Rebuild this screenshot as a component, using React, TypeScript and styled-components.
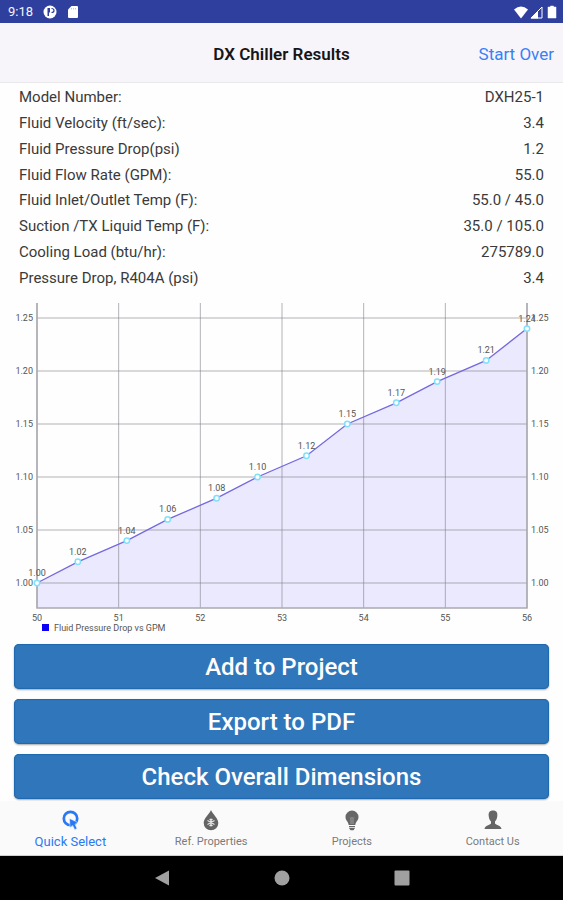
import React from "react";
import styled, { createGlobalStyle } from "styled-components";

const GlobalStyle = createGlobalStyle`
  * { box-sizing: border-box; }
  body { margin: 0; background: #fff; font-family: Roboto, "Liberation Sans", sans-serif; }
  button { font-family: inherit; border: 0; padding: 0; background: none; cursor: pointer; }
`;

const Screen = styled.div`
  display: flex;
  flex-direction: column;
  min-height: 100vh;
  background: #fefefe;
`;

const StatusBar = styled.div`
  display: flex;
  align-items: center;
  justify-content: space-between;
  height: 23px;
  padding: 1px 6px 0 8px;
  background: #2f3f9e;
  color: #f4f5fc;
  font-size: 13px;
  line-height: 20px;
`;

const StatusGroup = styled.div<{ $gap: number }>`
  display: flex;
  align-items: center;
  gap: ${(p) => p.$gap}px;
`;

const Header = styled.header`
  display: grid;
  grid-template-columns: 1fr auto 1fr;
  align-items: center;
  height: 60px;
  padding: 2px 9px 0;
  background: #f7f5f9;
  border-bottom: 1px solid #e9e8ea;
`;

const Title = styled.h1`
  grid-column: 2;
  margin: 0;
  color: #161618;
  font-size: 17px;
  line-height: 24px;
  font-weight: 600;
`;

const HeaderLink = styled.a`
  justify-self: end;
  color: #3880f8;
  font-size: 17px;
  line-height: 24px;
  text-decoration: none;
`;

const Results = styled.table`
  width: 100%;
  height: 207px;
  border-collapse: collapse;
  color: #3a3a3a;
  font-size: 15px;
  line-height: 20px;

  th, td { padding: 2px 19px 0; font-weight: 400; }
  th { text-align: left; }
  td { text-align: right; }
`;

const ChartDrawing = styled.svg`
  display: block;
  width: 100%;
  height: auto;
  font-size: 9px;
  fill: #555;
`;

const Actions = styled.div`
  display: flex;
  flex-direction: column;
  gap: 10px;
  padding: 4px 14px 2px;
`;

const ActionButton = styled.button`
  height: 45px;
  padding-top: 1px;
  border-radius: 5px;
  background: #3076ba;
  box-shadow: 0 1px 2px rgba(0, 0, 0, 0.35), inset 0 0 1px 1px #1f69b0;
  color: #fff;
  font-size: 24px;
  line-height: 32px;
  font-weight: 500;
`;

const TabBar = styled.nav`
  display: grid;
  grid-template-columns: repeat(4, 1fr);
  height: 55px;
  margin-top: auto;
  background: #fafafa;
  border-bottom: 1px solid #cfcfcf;
`;

const Tab = styled.button<{ $active?: boolean }>`
  display: flex;
  flex-direction: column;
  align-items: center;
  gap: 2px;
  padding-top: 8px;
  color: ${(p) => (p.$active ? "#2979f5" : "#7b7b7b")};
  font-size: ${(p) => (p.$active ? 13 : 11)}px;
  line-height: 18px;
`;

const SystemBar = styled.div`
  display: flex;
  align-items: center;
  justify-content: center;
  gap: 104px;
  height: 44px;
  background: #000;
`;

const SystemButton = styled.button`
  display: flex;
  width: 16px;
  height: 16px;
`;

const rows = [
  ["Model Number:", "DXH25-1"],
  ["Fluid Velocity (ft/sec):", "3.4"],
  ["Fluid Pressure Drop(psi)", "1.2"],
  ["Fluid Flow Rate (GPM):", "55.0"],
  ["Fluid Inlet/Outlet Temp (F):", "55.0 / 45.0"],
  ["Suction /TX Liquid Temp (F):", "35.0 / 105.0"],
  ["Cooling Load (btu/hr):", "275789.0"],
  ["Pressure Drop, R404A (psi)", "3.4"],
];

const points = [
  [50, 1.0], [50.5, 1.02], [51.1, 1.04], [51.6, 1.06], [52.2, 1.08], [52.7, 1.1],
  [53.3, 1.12], [53.8, 1.15], [54.4, 1.17], [54.9, 1.19], [55.5, 1.21], [56, 1.24],
];
const xTicks = [50, 51, 52, 53, 54, 55, 56];
const yTicks = [1.0, 1.05, 1.1, 1.15, 1.2, 1.25];

const LEFT = 37;
const RIGHT = 527;
const TOP = 13;
const BOTTOM = 318;
const px = (x: number) => LEFT + ((x - 50) * (RIGHT - LEFT)) / 6;
const py = (y: number) => 293 - (y - 1) * 1060;

function PressureChart() {
  const line = points.map(([x, y]) => `${px(x)},${py(y)}`).join(" ");
  return (
    <ChartDrawing viewBox="0 0 563 350" role="img" aria-label="Fluid Pressure Drop vs GPM">
      <polygon points={`${LEFT},${BOTTOM} ${line} ${RIGHT},${BOTTOM}`} fill="#ebe9fd" />
      <g stroke="#77777f" strokeOpacity="0.55">
        {xTicks.map((x) => (
          <line key={x} x1={px(x)} x2={px(x)} y1={TOP} y2={BOTTOM} />
        ))}
        {yTicks.map((y) => (
          <line key={y} x1={LEFT} x2={RIGHT} y1={py(y)} y2={py(y)} />
        ))}
      </g>
      <path d={`M${LEFT} ${TOP}V${BOTTOM}H${RIGHT}V${TOP}`} fill="none" stroke="#aaaab0" strokeWidth="1.5" />
      <polyline points={line} fill="none" stroke="#7468df" strokeWidth="1.3" />
      {points.map(([x, y]) => (
        <g key={x}>
          <circle cx={px(x)} cy={py(y)} r="2.7" fill="#fff" stroke="#82e0fb" strokeWidth="1.5" />
          <text x={px(x)} y={py(y) - 7} textAnchor="middle">{y.toFixed(2)}</text>
        </g>
      ))}
      {yTicks.map((y) => (
        <g key={y}>
          <text x="33" y={py(y) + 3} textAnchor="end">{y.toFixed(2)}</text>
          <text x="531" y={py(y) + 3}>{y.toFixed(2)}</text>
        </g>
      ))}
      {xTicks.map((x) => (
        <text key={x} x={px(x)} y="331" textAnchor="middle">{x}</text>
      ))}
      <rect x="42" y="334" width="7" height="7" fill="#0a00f5" />
      <text x="54" y="341">Fluid Pressure Drop vs GPM</text>
    </ChartDrawing>
  );
}

const QuickIcon = () => (
  <svg width="22" height="22" viewBox="0 0 22 22" fill="none" stroke="currentColor">
    <circle cx="11.500" cy="9.500" r="6.700" strokeWidth="2.700" />
    <path d="M10.500 9.500l8.500 4-3 1.700 2 4.300-2.300 1.200-2-4.300-2.700 2z" fill="currentColor" stroke="#fafafa" strokeWidth="0.500" />
  </svg>
);

const DropIcon = () => (
  <svg width="22" height="22" viewBox="0 0 22 22">
    <path d="M11 1C9.500 5 3.700 9 3.700 14a7.300 7.300 0 0 0 14.600 0C18.300 9 12.500 5 11 1z" fill="#646464" />
    <path d="M11 9.500v8M7.500 11.500l7 4M14.500 11.500l-7 4M9.500 10.200l1.500 1.300 1.500-1.300M9.500 16.800l1.500-1.300 1.500 1.300" stroke="#e8e8e8" strokeWidth="1.100" fill="none" />
  </svg>
);

const BulbIcon = () => (
  <svg width="22" height="22" viewBox="0 0 22 22">
    <path d="M11 1.500a6.500 6.500 0 0 0-6.500 6.500c0 3.500 2.800 4.500 3.200 8h6.600c.4-3.500 3.200-4.500 3.200-8A6.500 6.500 0 0 0 11 1.500z" fill="#676767" />
    <path d="M8.800 8.500l1.100 1 1.100-1 1.100 1 1.100-1M10 10v5M12 10v5" stroke="#b5b5b5" strokeWidth="0.700" fill="none" />
    <path d="M8 17h6v1.300H8zM8 19h6l-1.500 2.200h-3z" fill="#676767" />
  </svg>
);

const PersonIcon = () => (
  <svg width="22" height="22" viewBox="0 0 22 22" fill="#666">
    <path d="M11 1.500c-3.500 0-4.700 2.200-4.300 5.500.3 3 1.200 4.200 2.300 5.500v2c-1 1.800-6 1.800-6.500 5.500h17c-.5-3.700-5.500-3.700-6.500-5.500v-2c1.100-1.300 2-2.500 2.300-5.500.4-3.300-.8-5.500-4.300-5.500z" />
  </svg>
);

const tabs = [
  { label: "Quick Select", Icon: QuickIcon },
  { label: "Ref. Properties", Icon: DropIcon },
  { label: "Projects", Icon: BulbIcon },
  { label: "Contact Us", Icon: PersonIcon },
];

export default function App() {
  return (
    <Screen>
      <GlobalStyle />
      <StatusBar>
        <StatusGroup $gap={10}>
          <span>9:18</span>
          <svg width="14" height="14" viewBox="0 0 14 14">
            <circle cx="7" cy="7" r="6.500" fill="#fff" />
            <path d="M4.500 3H7v4.500H6V11H4.500z" fill="#2f3f9e" />
            <path d="M8.500 3.500q2.500 0 2.500 2T8.500 7.500" fill="none" stroke="#2f3f9e" strokeWidth="1.200" />
          </svg>
          <svg width="12" height="14" viewBox="0 0 12 14">
            <path d="M4.500 1H10a1 1 0 0 1 1 1v10a1 1 0 0 1-1 1H2a1 1 0 0 1-1-1V4.500z" fill="#fff" />
            <path d="M4.500 3v1.500M6.500 3v1.500M8.500 3v1.500" stroke="#c5caeb" />
          </svg>
        </StatusGroup>
        <StatusGroup $gap={2}>
          <svg width="14" height="13" viewBox="0 0 14 13">
            <path d="M0 3.500Q7-2.500 14 3.500L7 12.500z" fill="#fff" />
          </svg>
          <svg width="13" height="13" viewBox="0 0 13 13">
            <path d="M12 1v11H1z" fill="none" stroke="#fff" />
            <path d="M8 5v7.500H.5z" fill="#fff" />
          </svg>
          <svg width="12" height="14" viewBox="0 0 12 14">
            <path d="M5.500 1h3v1H11v11H3V2h2.500z" fill="#fff" stroke="#fff" strokeWidth="0.500" />
          </svg>
        </StatusGroup>
      </StatusBar>
      <Header>
        <Title>DX Chiller Results</Title>
        <HeaderLink href="#start">Start Over</HeaderLink>
      </Header>
      <main>
        <Results>
          <tbody>
            {rows.map(([label, value]) => (
              <tr key={label}>
                <th scope="row">{label}</th>
                <td>{value}</td>
              </tr>
            ))}
          </tbody>
        </Results>
        <PressureChart />
        <Actions>
          <ActionButton>Add to Project</ActionButton>
          <ActionButton>Export to PDF</ActionButton>
          <ActionButton>Check Overall Dimensions</ActionButton>
        </Actions>
      </main>
      <TabBar>
        {tabs.map(({ label, Icon }, i) => (
          <Tab key={label} $active={i === 0}>
            <Icon />
            {label}
          </Tab>
        ))}
      </TabBar>
      <SystemBar>
        <SystemButton aria-label="Back">
          <svg width="16" height="16" viewBox="0 0 16 16" fill="#a0a0a0"><path d="M1 8L15 .500v15z" /></svg>
        </SystemButton>
        <SystemButton aria-label="Home">
          <svg width="16" height="16" viewBox="0 0 16 16" fill="#a0a0a0"><circle cx="8" cy="8" r="7.500" /></svg>
        </SystemButton>
        <SystemButton aria-label="Recent apps">
          <svg width="16" height="16" viewBox="0 0 16 16" fill="#a0a0a0"><rect x=".500" y=".500" width="15" height="15" rx="1" /></svg>
        </SystemButton>
      </SystemBar>
    </Screen>
  );
}
